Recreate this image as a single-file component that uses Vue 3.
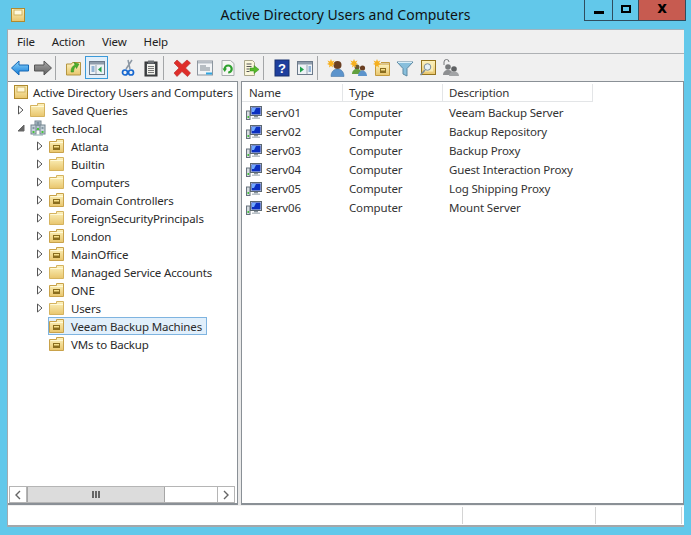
<script setup>
const menus = ['File', 'Action', 'View', 'Help']
const tools = [
  { id: 'back' }, { id: 'forward' }, { sep: true },
  { id: 'up' }, { id: 'tree', active: true },
  { id: 'cut', gap: true }, { id: 'paste' }, { sep: true },
  { id: 'del' }, { id: 'props' }, { id: 'refresh' }, { id: 'export' }, { sep: true },
  { id: 'help' }, { id: 'pane' }, { sep: true },
  { id: 'nuser' }, { id: 'ngroup' }, { id: 'nou' }, { id: 'filter' }, { id: 'find' }, { id: 'deleg' }
]
const tree = [
  { label: 'Active Directory Users and Computers', icon: 'aduc', level: 0, root: true },
  { label: 'Saved Queries', icon: 'folder', level: 1, arrow: 'closed' },
  { label: 'tech.local', icon: 'domain', level: 1, arrow: 'open' },
  { label: 'Atlanta', icon: 'ou', level: 2, arrow: 'closed' },
  { label: 'Builtin', icon: 'folder', level: 2, arrow: 'closed' },
  { label: 'Computers', icon: 'folder', level: 2, arrow: 'closed' },
  { label: 'Domain Controllers', icon: 'ou', level: 2, arrow: 'closed' },
  { label: 'ForeignSecurityPrincipals', icon: 'folder', level: 2, arrow: 'closed' },
  { label: 'London', icon: 'ou', level: 2, arrow: 'closed' },
  { label: 'MainOffice', icon: 'ou', level: 2, arrow: 'closed' },
  { label: 'Managed Service Accounts', icon: 'folder', level: 2, arrow: 'closed' },
  { label: 'ONE', icon: 'ou', level: 2, arrow: 'closed' },
  { label: 'Users', icon: 'folder', level: 2, arrow: 'closed' },
  { label: 'Veeam Backup Machines', icon: 'ou', level: 2, selected: true },
  { label: 'VMs to Backup', icon: 'ou', level: 2 }
]
const rows = [
  ['serv01', 'Computer', 'Veeam Backup Server'],
  ['serv02', 'Computer', 'Backup Repository'],
  ['serv03', 'Computer', 'Backup Proxy'],
  ['serv04', 'Computer', 'Guest Interaction Proxy'],
  ['serv05', 'Computer', 'Log Shipping Proxy'],
  ['serv06', 'Computer', 'Mount Server']
]
</script>

<template>
  <div class="window">
    <svg class="defs" width="0" height="0">
      <defs>
        <linearGradient id="gold" x1="0" y1="0" x2="0" y2="1"><stop offset="0" stop-color="#fdf3c0"/><stop offset="1" stop-color="#e8c56c"/></linearGradient>
        <linearGradient id="blue" x1="0" y1="0" x2="0" y2="1"><stop offset="0" stop-color="#8fd8fb"/><stop offset="1" stop-color="#0f78d8"/></linearGradient>
        <linearGradient id="gray" x1="0" y1="0" x2="0" y2="1"><stop offset="0" stop-color="#a8a8a8"/><stop offset="1" stop-color="#5f5f5f"/></linearGradient>
        <symbol id="folder" viewBox="0 0 16 16"><path d="M.5 14.500V3.500h7V1.500h7v13z" fill="url(#gold)" stroke="#d5b35e"/><path d="M1.500 4.500h12.500" stroke="#fff9d8"/></symbol>
        <symbol id="ou" viewBox="0 0 16 16"><path d="M.5 14.500V3.500h7V1.500h7v13z" fill="url(#gold)" stroke="#c9a24a"/><path d="M1.500 4.500h12.500" stroke="#fff9d8"/><rect x="4" y="7" width="7" height="5" fill="#8a6d1e"/><rect x="5" y="8" width="5" height="1.500" fill="#f7e08a"/></symbol>
        <symbol id="aduc" viewBox="0 0 16 16"><rect x="1.500" y="1.500" width="13" height="13" fill="url(#gold)" stroke="#b08a2e"/><rect x="4" y="3" width="8" height="5" fill="#fff9dc" stroke="#d2b462"/></symbol>
        <symbol id="domain" viewBox="0 0 16 16"><rect x="5" y="1" width="6" height="9" fill="#b8c6d0" stroke="#74858f"/><rect x="1" y="5" width="5" height="9" fill="#c4d0d8" stroke="#74858f"/><rect x="10" y="5" width="5" height="9" fill="#c4d0d8" stroke="#74858f"/><path d="M6.500 3h3M6.500 5h3M2.500 8h2M11.500 8h2" stroke="#46606e"/><rect x="2.500" y="11" width="2" height="2" fill="#46c43c"/><rect x="11.500" y="11" width="2" height="2" fill="#46c43c"/><rect x="7" y="8" width="2" height="2" fill="#46c43c"/><path d="M3 15h10" stroke="#8aa"/></symbol>
        <symbol id="computer" viewBox="0 0 16 16"><rect x="0.500" y="6" width="3.500" height="8.500" fill="#d8dde2" stroke="#66727c"/><rect x="1.500" y="11" width="1.500" height="2" fill="#45c23c"/><rect x="4.500" y="1.500" width="11" height="9" fill="#d9dee2" stroke="#5c6872"/><rect x="5.500" y="2.500" width="9" height="7" fill="#0b2fc0"/><path d="M6 3h4l-2 4H6z" fill="#6fa8ff"/><rect x="8" y="11" width="4" height="1.500" fill="#87929b"/><rect x="6" y="12.500" width="8" height="1.500" fill="#b9c1c7"/></symbol>
        <symbol id="arrow-closed" viewBox="0 0 8 10"><path d="M1.500 1v8L6 5z" fill="#fff" stroke="#555"/></symbol>
        <symbol id="arrow-open" viewBox="0 0 8 10"><path d="M7 2v6H1z" fill="#666" stroke="#666"/></symbol>
        <symbol id="back" viewBox="0 0 18 18"><path d="M.5 9L8 2v4h9.500v6H8v4z" fill="url(#blue)" stroke="#1668b4"/></symbol>
        <symbol id="forward" viewBox="0 0 18 18"><path d="M17.500 9L10 2v4H.5v6H10v4z" fill="url(#gray)" stroke="#555"/></symbol>
        <symbol id="up" viewBox="0 0 18 18"><path d="M1.500 16V5h5l1-1.500h8V16z" fill="url(#gold)" stroke="#b49540"/><path d="M6 13c0-4 1.500-6 4-7l-1-2.500 5 1.500-2.500 4.500-.8-2c-1.500 1-2 3-2.200 5.500z" fill="#4cae2e" stroke="#2e8a16" stroke-width=".5"/></symbol>
        <symbol id="tree" viewBox="0 0 18 18"><rect x="1.500" y="2.500" width="15" height="13" fill="#eef2f6" stroke="#6c7a8a"/><rect x="2" y="3" width="14" height="2.500" fill="#8f9cab"/><path d="M3.500 8h3M3.500 10h3M3.500 12h3" stroke="#3a76b6"/><path d="M8 6v9" stroke="#9aa6b2"/><path d="M13.500 7.500v6L10 10.500z" fill="#1fa34a"/></symbol>
        <symbol id="cut" viewBox="0 0 18 18"><path d="M7 10L13 1M11 10L9 1" stroke="#8c97a3" stroke-width="1.500" fill="none"/><circle cx="6" cy="13.500" r="2.500" fill="none" stroke="#1667d0" stroke-width="1.700"/><circle cx="12" cy="13.500" r="2.500" fill="none" stroke="#1667d0" stroke-width="1.700"/></symbol>
        <symbol id="paste" viewBox="0 0 18 18"><rect x="3" y="3" width="12" height="14" fill="#44484c" stroke="#333"/><rect x="5" y="5" width="8" height="10.500" fill="#f1f1ec"/><rect x="6" y="1.500" width="6" height="3" fill="#6c7074"/><path d="M6 7.500h6M6 9.500h6M6 11.500h6M6 13.500h6" stroke="#777"/></symbol>
        <symbol id="del" viewBox="0 0 18 18"><path d="M1 4l3-3 5 4.500L14 1l3.500 3-5 5 5 5-3 3.500-5.500-5L4 17.500 1 14l5-5z" fill="#df2e2a" stroke="#b32a26" stroke-width=".6"/></symbol>
        <symbol id="props" viewBox="0 0 18 18"><rect x="1.500" y="2" width="15" height="14" fill="#f2f4f6" stroke="#8d969f"/><rect x="2" y="2.500" width="14" height="2" fill="#b5bcc3"/><path d="M4 7h6M4 9h10M4 11h10" stroke="#7d8790"/><rect x="10" y="13.500" width="6" height="2" fill="#30a6e0"/></symbol>
        <symbol id="refresh" viewBox="0 0 18 18"><path d="M3 1.500h8.500l3.500 3v12H3z" fill="#f7f7f4" stroke="#a9adb0"/><path d="M5.700 10a3.500 3.500 0 1 1 3.500 3.500" fill="none" stroke="#2ea12e" stroke-width="2.200"/><path d="M3.500 9.500h4.500L5.700 13z" fill="#2ea12e"/></symbol>
        <symbol id="export" viewBox="0 0 18 18"><path d="M2.500 1.500h8l2 2v13h-10z" fill="#fbf7dc" stroke="#a9a68a"/><path d="M4.500 5h5M4.500 7.500h5M4.500 10h3M4.500 12.500h3" stroke="#555"/><path d="M8 9h4V6.500l5 4-5 4V12H8z" fill="#57b82a" stroke="#2f8c14" stroke-width=".5"/></symbol>
        <symbol id="help" viewBox="0 0 18 18"><rect x="2" y="1" width="14" height="16" fill="#1f3f9e" stroke="#16306f"/><text x="9" y="14" font-size="13" font-weight="700" fill="#fff" text-anchor="middle" font-family="Liberation Sans">?</text></symbol>
        <symbol id="pane" viewBox="0 0 18 18"><rect x="1.500" y="2.500" width="15" height="13" fill="#eef2f6" stroke="#6c7a8a"/><rect x="2" y="3" width="14" height="2.500" fill="#8f9cab"/><path d="M11 6v9" stroke="#9aa6b2"/><path d="M4 7.500v6L8 10.500z" fill="#1fa34a"/><path d="M12.500 8h2.500M12.500 10h2.500M12.500 12h2.500" stroke="#3a76b6"/></symbol>
        <g id="spark"><path d="M4 0l1 2.500L7.500 1.500 6 4l2 1-2.500 1 .5 2.500L4 7 2 8.500 2.500 6 0 5l2-1L.5 1.500 3 2.500z" fill="#f6b01e"/></g>
        <symbol id="nuser" viewBox="0 0 18 18"><circle cx="10.500" cy="6" r="4" fill="#6a3f22"/><path d="M4 17.500c0-5 3-7.500 6.500-7.500s6.500 2.500 6.500 7.500z" fill="#5c94cc" stroke="#3c6c9c" stroke-width=".5"/><use href="#spark"/></symbol>
        <symbol id="ngroup" viewBox="0 0 18 18"><circle cx="7" cy="8" r="2.500" fill="#6a5a30"/><path d="M2 15c0-3 2-5 5-5s5 2 5 5z" fill="#62a03e"/><circle cx="12.500" cy="9" r="2.600" fill="#6a3f22"/><path d="M8 17c0-3 2-5.500 4.500-5.500S17 14 17 17z" fill="#5c94cc"/><use href="#spark"/></symbol>
        <symbol id="nou" viewBox="0 0 18 18"><path d="M2.500 16.500V5h14v11.500z" fill="url(#gold)" stroke="#c39a3e"/><path d="M8 3.500h8.500V7" fill="none" stroke="#c39a3e"/><rect x="7" y="9" width="6" height="5" fill="#8a6d1e"/><rect x="8" y="10" width="4" height="1.500" fill="#f7e08a"/><use href="#spark"/></symbol>
        <symbol id="filter" viewBox="0 0 18 18"><path d="M1 3h16l-6 6.500V17l-4-2V9.500z" fill="#88bfdc" stroke="#5c89a3"/><path d="M2 3.500h14" stroke="#d8eef8"/></symbol>
        <symbol id="find" viewBox="0 0 18 18"><rect x="2.500" y="1.500" width="14" height="14" fill="url(#gold)" stroke="#947420"/><rect x="5" y="3.500" width="9" height="9" fill="#f9edb8"/><circle cx="8.500" cy="8" r="3.300" fill="#e6f1f7" stroke="#7d8d99"/><path d="M6 11l-4.500 5" stroke="#7d8d99" stroke-width="1.600"/></symbol>
        <symbol id="deleg" viewBox="0 0 18 18"><path d="M2 6V3a2.500 2.500 0 0 1 5 0" fill="none" stroke="#77797b"/><circle cx="6" cy="8" r="2.800" fill="#77797b"/><path d="M1 16c0-3 2-5 5-5s5 2 5 5z" fill="#8d8f91"/><circle cx="12" cy="10" r="2.800" fill="#5f6163"/><path d="M7 17c0-3 2-4.500 5-4.500s5 1.500 5 4.500z" fill="#a2a4a6"/></symbol>
      </defs>
    </svg>

    <header class="titlebar">
      <svg class="app-icon" width="16" height="16"><use href="#aduc"/></svg>
      <h1 class="title">Active Directory Users and Computers</h1>
      <div class="controls">
        <span class="ctl min"><i></i></span>
        <span class="ctl max"><i></i></span>
        <span class="ctl close">x</span>
      </div>
    </header>

    <div class="client">
      <nav class="menu"><span v-for="m in menus" :key="m">{{ m }}</span></nav>
      <div class="toolbar">
        <template v-for="(t, i) in tools" :key="i">
          <span v-if="t.sep" class="sep"></span>
          <span v-else class="tool" :class="{ active: t.active, gap: t.gap }">
            <svg width="18" height="18"><use :href="'#' + t.id"/></svg>
          </span>
        </template>
      </div>

      <div class="panes">
        <aside class="left">
          <div class="tree">
            <div v-for="n in tree" :key="n.label" class="node" :class="'lv' + n.level">
              <span class="arrow">
                <svg v-if="n.arrow" width="8" height="10"><use :href="'#arrow-' + n.arrow"/></svg>
              </span>
              <span class="node-in" :class="{ selected: n.selected }">
                <svg width="16" height="16"><use :href="'#' + n.icon"/></svg>
                <span class="lbl">{{ n.label }}</span>
              </span>
            </div>
          </div>
          <div class="hscroll">
            <span class="sbtn"><svg width="8" height="10" viewBox="0 0 8 10"><path d="M6 1L2 5l4 4" fill="none" stroke="#666" stroke-width="1.400"/></svg></span>
            <span class="thumb"><i></i><i></i><i></i></span>
            <span class="track"></span>
            <span class="sbtn"><svg width="8" height="10" viewBox="0 0 8 10"><path d="M2 1l4 4-4 4" fill="none" stroke="#666" stroke-width="1.400"/></svg></span>
          </div>
        </aside>
        <main class="right">
          <div class="thead">
            <span class="th c1">Name</span>
            <span class="th c2">Type</span>
            <span class="th c3">Description</span>
          </div>
          <div v-for="r in rows" :key="r[0]" class="tr">
            <span class="td c1"><svg width="16" height="16"><use href="#computer"/></svg>{{ r[0] }}</span>
            <span class="td c2">{{ r[1] }}</span>
            <span class="td c3">{{ r[2] }}</span>
          </div>
        </main>
      </div>

      <footer class="status">
        <span class="st s1"></span>
        <span class="st s2"></span>
        <span class="st s3"></span>
      </footer>
    </div>
  </div>
</template>

<style>
html, body { margin: 0; background: #62c8ea; overflow: hidden; }
</style>

<style scoped>
.window {
  width: 691px; height: 535px; box-sizing: border-box; padding-bottom: 8px;
  background: #62c8ea; display: flex; flex-direction: column;
  font-family: "Noto Sans", "Open Sans", sans-serif; font-size: 11.500px; letter-spacing: -0.15px; color: #2a2a2a;
}
.defs { position: absolute; }
.titlebar { height: 29px; flex: none; display: grid; grid-template-columns: 1fr auto 1fr; align-items: start; }
.app-icon { margin: 7px 0 0 10px; }
.title { margin: 5px 0 0; font-size: 14px; font-weight: 400; letter-spacing: 0; color: #111; line-height: 20px; }
.controls { justify-self: end; margin-right: 5px; display: flex; height: 21px; box-sizing: border-box; border: 1px solid #2f4d5e; border-top: 0; }
.ctl { display: flex; align-items: center; justify-content: center; box-sizing: border-box; }
.min { width: 28px; border-right: 1px solid #2f4d5e; }
.min i { width: 10px; height: 3px; background: #000; margin-top: 5px; }
.max { width: 26px; border-right: 1px solid #2f4d5e; }
.max i { width: 6px; height: 4px; border: 2px solid #000; margin-top: -2px; }
.close { width: 46px; background: #c75b50; color: #000; font: 700 15px/1 "DejaVu Sans", sans-serif; padding-bottom: 4px; }

.client { flex: 1; margin: 0 7px; display: flex; flex-direction: column; background: #f0f0f0; border-left: 1px solid #a3abb0; border-top: 1px solid #9fb4bf; min-height: 0; }
.menu { height: 23px; flex: none; display: flex; align-items: center; gap: 17px; padding-left: 9px; border-bottom: 1px solid #aeb1b4; background: #f0f0f0; color: #222; }
.toolbar { height: 27px; flex: none; display: flex; align-items: center; background: #f0f0f0; }
.tool { width: 23px; height: 23px; flex: none; display: flex; align-items: center; justify-content: center; box-sizing: border-box; }
.tool.active { background: #e2effa; border: 1px solid #3b9ad9; }
.tool.gap { margin-left: 8px; }
.sep { width: 1px; height: 24px; background: #a4a6a8; margin: 0 6px 0 1px; flex: none; }

.panes { flex: 1; min-height: 0; display: flex; background: #e9e9e9; }
.left { width: 230px; flex: none; box-sizing: border-box; background: #fff; border-right: 1px solid #8a9096; border-bottom: 2px solid #8a9096; border-top: 1px solid #8a9096; display: flex; flex-direction: column; margin-right: 3px; }
.tree { flex: 1; padding-top: 1px; }
.node { height: 18px; display: flex; align-items: center; white-space: nowrap; }
.lv0 { padding-left: 4px; }
.lv1 { padding-left: 9px; }
.lv2 { padding-left: 28px; }
.arrow { width: 8px; height: 10px; flex: none; display: flex; margin-right: 5px; }
.lv0 .arrow { display: none; }
.node-in { display: flex; align-items: center; height: 18px; box-sizing: border-box; gap: 6px; padding: 0 3px 0 0; border: 1px solid transparent; margin-left: -1px; }
.node-in.selected { background: #e1effb; border-color: #7fb4e0; padding-right: 4px; }
.lv0 .node-in { margin-left: 0; gap: 4px; }

.hscroll { height: 17px; flex: none; margin: 0 2px 0 1px; display: flex; box-sizing: border-box; border: 1px solid #b5b5b5; background: #fff; }
.sbtn { width: 16px; flex: none; display: flex; align-items: center; justify-content: center; border-right: 1px solid #b5b5b5; }
.sbtn:last-child { border-right: 0; border-left: 1px solid #b5b5b5; }
.thumb { width: 138px; flex: none; box-sizing: border-box; background: #dcdcdc; border: 1px solid #a6a6a6; border-width: 0 1px; display: flex; align-items: center; justify-content: center; gap: 1px; }
.thumb i { width: 2px; height: 7px; background: #666; }
.track { flex: 1; }

.right { flex: 1; box-sizing: border-box; background: #fff; border: 1px solid #8a9096; border-bottom-width: 2px; padding-top: 2px; }
.thead { height: 18px; display: flex; align-items: center; margin-bottom: 1px; }
.th { box-sizing: border-box; height: 18px; display: flex; align-items: center; padding-left: 6px; border-right: 1px solid #e3e5e7; border-bottom: 1px solid #e3e5e7; color: #333; }
.th.c1 { padding-left: 7px; }
.tr { display: flex; height: 19px; align-items: center; }
.td { box-sizing: border-box; padding-left: 6px; display: flex; align-items: center; color: #333; white-space: nowrap; }
.td.c1 { padding-left: 4px; gap: 4px; }
.c1 { width: 101px; }
.c2 { width: 100px; }
.c3 { width: 150px; }

.status { height: 21px; flex: none; display: flex; background: #fff; border-bottom: 2px solid #a3a7aa; box-sizing: border-box; margin-top: 1px; }
.st { box-sizing: border-box; border-right: 1px solid #d4d4d4; margin: 1px 0; }
.s1 { width: 455px; }
.s2 { width: 133px; }
.s3 { width: 86px; }
</style>
